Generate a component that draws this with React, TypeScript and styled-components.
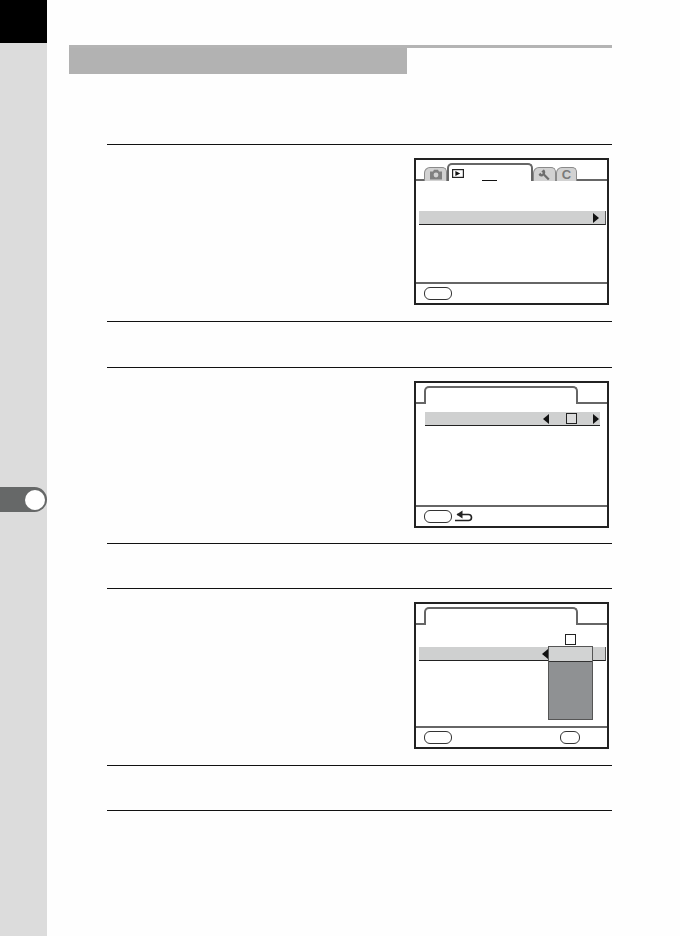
import React from "react";
import styled, { createGlobalStyle } from "styled-components";

const Global = createGlobalStyle`
  html, body { margin: 0; padding: 0; background: #fff; font-family: "Liberation Sans", sans-serif; }
`;

const Page = styled.div`
  display: flex;
  width: 680px;
  height: 936px;
  overflow: hidden;
  background: #fefefe;
`;

const Sidebar = styled.aside`
  flex: 0 0 47px;
  display: flex;
  flex-direction: column;
  background: #dcdcdc;
`;

const BlackCap = styled.div`
  height: 43px;
  background: #000;
`;

const ChapterTab = styled.div`
  margin-top: 444px;
  width: 47px;
  height: 25px;
  box-sizing: border-box;
  display: flex;
  justify-content: flex-end;
  align-items: center;
  padding-right: 2px;
  background: #666868;
  border-radius: 0 13px 13px 0;
`;

const ChapterDot = styled.div`
  width: 20px;
  height: 20px;
  border-radius: 50%;
  background: #fff;
`;

const Main = styled.main`
  flex: 0 0 543px;
  margin-left: 22px;
  padding-top: 45px;
`;

const Header = styled.header`
  height: 29px;
  box-sizing: border-box;
  border-top: 3px solid #b4b4b4;
`;

const HeaderBlock = styled.div`
  width: 338px;
  height: 26px;
  background: #b2b2b2;
`;

const Steps = styled.div`
  margin: 70px 0 0 38px;
`;

const StepRow = styled.section<{ $h: number }>`
  box-sizing: border-box;
  height: ${(p) => p.$h}px;
  padding: 13px 3px 0 0;
  border-top: 1px solid #111;
  display: flex;
  justify-content: flex-end;
  align-items: flex-start;
`;

const NoteRow = styled.div<{ $h: number }>`
  box-sizing: border-box;
  height: ${(p) => p.$h}px;
  border-top: 1px solid #111;
`;

const Screen = styled.div`
  position: relative;
  box-sizing: border-box;
  width: 195px;
  height: 147px;
  border: 2px solid #222;
  display: flex;
  flex-direction: column;
  background: #fff;
`;

const TabStrip = styled.div`
  flex: 0 0 21px;
  box-sizing: border-box;
  border-bottom: 2px solid #666;
  display: flex;
  align-items: flex-end;
  padding-left: 8px;
`;

const SmallTab = styled.div<{ $w: number }>`
  position: relative;
  top: 2px;
  box-sizing: border-box;
  width: ${(p) => p.$w}px;
  height: 14px;
  background: #d2d2d2;
  border: 1px solid #8a8a8a;
  border-bottom: none;
  border-radius: 6px 5px 0 0;
  display: flex;
  align-items: center;
  justify-content: center;
  color: #7a7a7a;
`;

const ActiveTab = styled.div<{ $w: number }>`
  position: relative;
  top: 2px;
  box-sizing: border-box;
  width: ${(p) => p.$w}px;
  height: 18px;
  background: #fff;
  border: 2px solid #666;
  border-bottom: none;
  border-radius: 5px 5px 0 0;
  padding: 4px 0 0 3px;
`;

const TabTitle = styled.div`
  position: absolute;
  left: 33px;
  bottom: 0;
  width: 15px;
  height: 1px;
  background: #111;
`;

const Body = styled.div`
  flex: 1;
  display: flex;
  flex-direction: column;
`;

const MenuBar = styled.div<{ $top: number; $left: number; $right: number }>`
  box-sizing: border-box;
  height: 14px;
  margin: ${(p) => p.$top}px ${(p) => p.$right}px 0 ${(p) => p.$left}px;
  padding-right: 1px;
  background: #cfd0d0;
  border-bottom: 1px solid #222;
  display: flex;
  align-items: center;
  justify-content: flex-end;
`;

const EdgeBar = styled(MenuBar)`
  border-right: 1px solid #555;
  padding-right: 6px;
`;

const ArrowRight = styled.div`
  width: 0;
  height: 0;
  border-top: 5px solid transparent;
  border-bottom: 5px solid transparent;
  border-left: 6px solid #111;
`;

const ArrowLeft = styled.div`
  width: 0;
  height: 0;
  border-top: 5px solid transparent;
  border-bottom: 5px solid transparent;
  border-right: 6px solid #111;
`;

const ValueCheck = styled.div`
  box-sizing: border-box;
  width: 11px;
  height: 11px;
  background: #fff;
  border: 1.5px solid #222;
`;

const ValueGroup = styled.div`
  width: 56px;
  display: flex;
  align-items: center;
  justify-content: space-between;
`;

const BarValue = styled(ValueCheck)`
  background: #dcdcdc;
`;

const Footer = styled.footer`
  flex: 0 0 21px;
  box-sizing: border-box;
  border-top: 2px solid #666;
  display: flex;
  align-items: center;
  padding: 0 27px 1px 8px;
  gap: 3px;
`;

const Pill = styled.div<{ $w: number }>`
  box-sizing: border-box;
  width: ${(p) => p.$w}px;
  height: 13px;
  border: 1px solid #333;
  border-radius: 6px;
  background: #fff;
`;

const PushedPill = styled(Pill)`
  margin-left: auto;
`;

const Dropdown = styled.div`
  position: absolute;
  left: 131px;
  top: 30px;
  width: 46px;
  display: flex;
  flex-direction: column;
  align-items: center;
`;

const DropCheck = styled(ValueCheck)`
  margin-bottom: 1px;
`;

const DropList = styled.div`
  box-sizing: border-box;
  width: 45px;
  height: 74px;
  margin-left: 1px;
  background: #8f9193;
  border: 1px solid #555;
`;

const DropSelected = styled.div`
  height: 14px;
  background: #d2d3d3;
  border-bottom: 1px solid #333;
`;

const DropArrow = styled.div`
  position: absolute;
  left: 126px;
  top: 45px;
`;

const IconSlot = styled.span`
  display: flex;
`;

const Camera = () => (
  <svg width="14" height="11" viewBox="0 0 14 11">
    <path d="M1 2.5h3l1-1.7h4l1 1.7h3v8H1z" fill="#808080" />
    <circle cx="7" cy="6" r="2.4" fill="#d2d2d2" />
  </svg>
);

const Wrench = () => (
  <svg width="13" height="12" viewBox="0 0 13 12">
    <path d="M5.6 .6 3.4 2.6l1.5 1.5-1.1 1.1-1.5-1.4L.6 5.6c.5 1.6 2.1 2.4 3.7 1.8l1 -.8 4.7 4.7 1.6-1.6-4.7-4.7c.9-2 .1-3.9-1.3-4.4z" fill="#6e6e6e" />
  </svg>
);

const PlayIcon = () => (
  <svg width="12" height="9" viewBox="0 0 12 9" display="block">
    <rect x=".6" y=".6" width="10.8" height="7.8" fill="#fff" stroke="#222" strokeWidth="1.2" />
    <path d="M3.4 2l4.8 2.5-4.8 2.5z" fill="#111" />
  </svg>
);

const ReturnIcon = () => (
  <svg width="19" height="12" viewBox="0 0 19 12">
    <path d="M2 4.5h11.5a3 3 0 0 1 0 6H0" fill="none" stroke="#222" strokeWidth="1.6" />
    <path d="M7.5 .5v8L1.5 4.5z" fill="#222" />
  </svg>
);

const CLetter = styled.span`
  font-size: 13px;
  font-weight: 700;
  line-height: 1;
`;

const SingleTab = () => (
  <TabStrip>
    <ActiveTab $w={154} />
  </TabStrip>
);

const PlaybackScreen = () => (
  <Screen>
    <TabStrip>
      <SmallTab $w={23}>
        <IconSlot>
          <Camera />
        </IconSlot>
      </SmallTab>
      <ActiveTab $w={86}>
        <PlayIcon />
        <TabTitle />
      </ActiveTab>
      <SmallTab $w={23}>
        <IconSlot>
          <Wrench />
        </IconSlot>
      </SmallTab>
      <SmallTab $w={21}>
        <CLetter>C</CLetter>
      </SmallTab>
    </TabStrip>
    <Body>
      <EdgeBar $top={30} $left={3} $right={1}>
        <ArrowRight />
      </EdgeBar>
    </Body>
    <Footer>
      <Pill $w={28} />
    </Footer>
  </Screen>
);

const OptionScreen = () => (
  <Screen>
    <SingleTab />
    <Body>
      <MenuBar $top={8} $left={9} $right={7}>
        <ValueGroup>
          <ArrowLeft />
          <BarValue />
          <ArrowRight />
        </ValueGroup>
      </MenuBar>
    </Body>
    <Footer>
      <Pill $w={28} />
      <ReturnIcon />
    </Footer>
  </Screen>
);

const DropdownScreen = () => (
  <Screen>
    <SingleTab />
    <Body>
      <EdgeBar $top={22} $left={3} $right={1} />
    </Body>
    <DropArrow>
      <ArrowLeft />
    </DropArrow>
    <Dropdown>
      <DropCheck />
      <DropList>
        <DropSelected />
      </DropList>
    </Dropdown>
    <Footer>
      <Pill $w={28} />
      <PushedPill $w={20} />
    </Footer>
  </Screen>
);

export default function App() {
  return (
    <Page>
      <Global />
      <Sidebar>
        <BlackCap />
        <ChapterTab>
          <ChapterDot />
        </ChapterTab>
      </Sidebar>
      <Main>
        <Header>
          <HeaderBlock />
        </Header>
        <Steps>
          <StepRow $h={177}>
            <PlaybackScreen />
          </StepRow>
          <NoteRow $h={46} />
          <StepRow $h={176}>
            <OptionScreen />
          </StepRow>
          <NoteRow $h={45} />
          <StepRow $h={177}>
            <DropdownScreen />
          </StepRow>
          <NoteRow $h={45} />
          <NoteRow $h={2} />
        </Steps>
      </Main>
    </Page>
  );
}
